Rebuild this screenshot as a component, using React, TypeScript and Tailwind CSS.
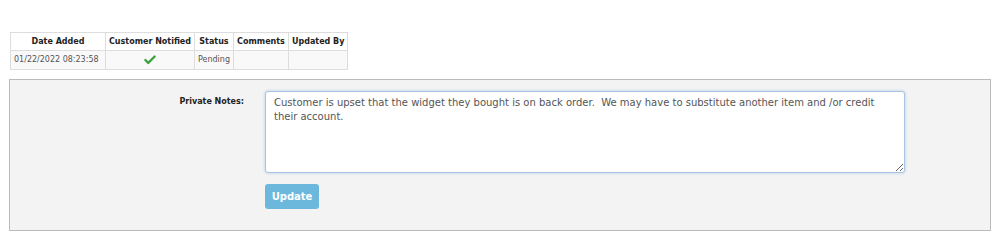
import { Check } from 'lucide-react';

const cols = ['Date Added', 'Customer Notified', 'Status', 'Comments', 'Updated By'];
const widths = ['w-[95px]', 'w-[87px]', 'w-[39px]', 'w-[55px]', 'w-[58px]'];

export default function App() {
  return (
    <div className="w-[1000px] h-[237px] bg-white font-['DejaVu_Sans',Verdana,sans-serif] text-[#333] pt-[32px] overflow-hidden">
      <div className="pl-[10px]">
        <table className="border-collapse table-fixed text-[8px] leading-none">
          <thead>
            <tr className="h-[18px]">
              {cols.map((c, i) => (
                <th key={c} className={`${widths[i]} border border-[#dddddd] px-[3px] font-bold text-[#222] text-center whitespace-nowrap`}>
                  {c}
                </th>
              ))}
            </tr>
          </thead>
          <tbody>
            <tr className="h-[19px] bg-[#f9f9f9]">
              <td className="border border-[#dddddd] px-[3px] text-[#555] whitespace-nowrap">01/22/2022 08:23:58</td>
              <td className="border border-[#dddddd] px-[3px]">
                <div className="flex justify-center">
                  <Check className="w-[14px] h-[14px] text-[#3da33d]" strokeWidth={4} />
                </div>
              </td>
              <td className="border border-[#dddddd] px-[3px] text-[#555]">Pending</td>
              <td className="border border-[#dddddd] px-[3px]"></td>
              <td className="border border-[#dddddd] px-[3px]"></td>
            </tr>
          </tbody>
        </table>
      </div>
      <div className="ml-[9px] mt-[9px] w-[982px] h-[152px] border border-[#bbbbbb] bg-[#f3f3f3] flex pt-[11px]">
        <div className="w-[234px] text-right pt-[5px] text-[8px] font-bold text-[#222]">Private Notes:</div>
        <div className="ml-[21px] flex flex-col">
          <textarea
            className="w-[640px] h-[82px] border border-[#a9c3e6] rounded-[3px] bg-white px-[8px] py-[4px] text-[10px] leading-[14px] text-[#555] shadow-[0_0_3px_rgba(102,153,204,0.45)] outline-none resize-y font-['DejaVu_Sans',Verdana,sans-serif]"
            defaultValue="Customer is upset that the widget they bought is on back order.  We may have to substitute another item and /or credit their account."
          />
          <button className="mt-[11px] w-[54px] h-[25px] rounded-[3px] bg-[#6cb8dd] text-white text-[10px] font-semibold">
            Update
          </button>
        </div>
      </div>
    </div>
  );
}
